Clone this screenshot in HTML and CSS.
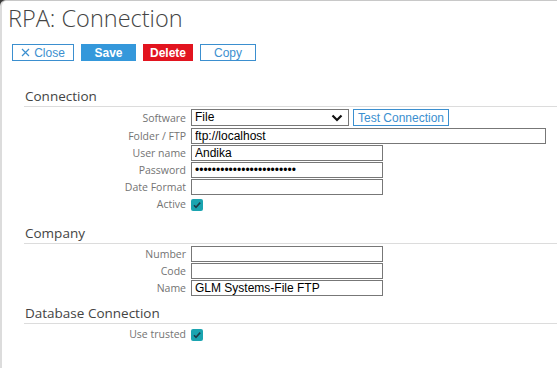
FILE: index.html
```
<!DOCTYPE html>
<html lang="en">
<head>
  <meta charset="UTF-8">
  <meta name="viewport" content="width=device-width, initial-scale=1.0">
  <title>RPA: Connection</title>
  <link rel="stylesheet" href="styles.css">
</head>
<body>

  <!-- editor panel -->
  <div class="panel">
    <h1>RPA: Connection</h1>

    <div class="toolbar">
      <button type="button" class="btn btn-outline btn-close">
        <svg width="9" height="9" viewBox="0 0 9 9"><path d="M1 1L8 8M8 1L1 8" stroke="#3b8fcf" stroke-width="1.2" fill="none"/></svg>
        Close
      </button>
      <button type="button" class="btn btn-save">Save</button>
      <button type="button" class="btn btn-delete">Delete</button>
      <button type="button" class="btn btn-outline btn-copy">Copy</button>
    </div>

    <!-- Connection -->
    <div class="section first">
      <h2>Connection</h2>
      <div class="row tall">
        <label>Software</label>
        <div class="field">
          <div class="select-box">
            <span class="select-value">File</span>
            <svg class="chevron" width="12" height="8" viewBox="0 0 12 8"><path d="M1.5 1.5L6 6L10.5 1.5" stroke="#111" stroke-width="2.2" fill="none"/></svg>
          </div>
          <button type="button" class="btn btn-outline btn-test">Test Connection</button>
        </div>
      </div>
      <div class="row">
        <label>Folder / FTP</label>
        <div class="field"><input type="text" class="input wide" value="ftp://localhost"></div>
      </div>
      <div class="row">
        <label>User name</label>
        <div class="field"><input type="text" class="input" value="Andika"></div>
      </div>
      <div class="row">
        <label>Password</label>
        <div class="field"><input type="password" class="input" value="abcdefghijklmnopqrstuvwx"></div>
      </div>
      <div class="row">
        <label>Date Format</label>
        <div class="field"><input type="text" class="input" value=""></div>
      </div>
      <div class="row">
        <label>Active</label>
        <div class="field">
          <span class="check"><svg width="12" height="12" viewBox="0 0 12 12"><path d="M3 6.2L5 8.3L9.2 3.6" stroke="#1f3b48" stroke-width="1.6" fill="none"/></svg></span>
        </div>
      </div>
    </div>

    <!-- Company -->
    <div class="section">
      <h2>Company</h2>
      <div class="row">
        <label>Number</label>
        <div class="field"><input type="text" class="input" value=""></div>
      </div>
      <div class="row">
        <label>Code</label>
        <div class="field"><input type="text" class="input" value=""></div>
      </div>
      <div class="row">
        <label>Name</label>
        <div class="field"><input type="text" class="input" value="GLM Systems-File FTP"></div>
      </div>
    </div>

    <!-- Database Connection -->
    <div class="section db">
      <h2>Database Connection</h2>
      <div class="row">
        <label>Use trusted</label>
        <div class="field">
          <span class="check"><svg width="12" height="12" viewBox="0 0 12 12"><path d="M3 6.2L5 8.3L9.2 3.6" stroke="#1f3b48" stroke-width="1.6" fill="none"/></svg></span>
        </div>
      </div>
    </div>
  </div>

</body>
</html>
```

FILE: styles.css
```
body {
  margin: 0;
  padding: 0;
  background-color: #3a3a3a;
  font-family: 'Open Sans', sans-serif;
  color: #444;
}

.panel {
  height: 367px;
  background-color: #fff;
  border-top: 1px solid #c8c8c8;
  border-left: 2px solid #dcdcdc;
  border-top-left-radius: 6px;
  overflow: hidden;
}

h1 {
  margin: 0;
  padding: 2px 0 0 6px;
  font-size: 23.5px;
  font-weight: 300;
  line-height: 31px;
  color: #444;
}

.toolbar {
  display: flex;
  gap: 7px;
  margin: 10px 0 0 10px;
}

.btn {
  font-family: 'Liberation Sans', Arial, sans-serif;
  font-size: 12px;
  height: 17px;
  padding: 0;
  border-radius: 0;
  cursor: pointer;
  display: flex;
  align-items: center;
  justify-content: center;
}

.btn-outline {
  background-color: #fff;
  border: 1px solid #3b8fcf;
  color: #3b8fcf;
}

.btn-close {
  width: 62px;
  gap: 4px;
}

.btn-copy {
  width: 56px;
}

.btn-save {
  width: 55px;
  background-color: #3498db;
  border: 1px solid #3498db;
  color: #fff;
  font-weight: bold;
}

.btn-delete {
  width: 50px;
  background-color: #e2141f;
  border: 1px solid #e2141f;
  color: #fff;
  font-weight: bold;
}

.section {
  margin: 11px 0 0 22px;
}

.section.first {
  margin-top: 25px;
}

.section.db {
  margin-top: 7px;
}

h2 {
  margin: 0 0 1px;
  padding: 0 0 0 1px;
  font-size: 13.5px;
  font-weight: 400;
  line-height: 20px;
  color: #444;
  border-bottom: 1px solid #dcdcdc;
}

.row {
  display: grid;
  grid-template-columns: 162px 1fr;
  column-gap: 5px;
  height: 17px;
  align-items: center;
}

.row.tall {
  height: 19px;
}

.row label {
  text-align: right;
  font-size: 10.5px;
  color: #737373;
  white-space: nowrap;
}

.field {
  display: flex;
  align-items: center;
  gap: 4px;
}

.input {
  box-sizing: border-box;
  width: 192px;
  height: 16px;
  padding: 0 3px;
  border: 1px solid #777;
  border-radius: 0;
  font-family: 'Liberation Sans', Arial, sans-serif;
  font-size: 12px;
  line-height: 14px;
  color: #000;
  outline: none;
}

.input.wide {
  width: 355px;
}

/* drop-down look-alike */
.select-box {
  box-sizing: border-box;
  width: 158px;
  height: 17px;
  padding: 0 5px 0 3px;
  border: 1px solid #777;
  background-color: #fff;
  display: flex;
  align-items: center;
  justify-content: space-between;
}

.select-value {
  font-family: 'Liberation Sans', Arial, sans-serif;
  font-size: 12px;
  line-height: 15px;
  color: #000;
}

.btn-test {
  width: 96px;
}

.check {
  display: inline-block;
  width: 12px;
  height: 12px;
  margin-top: 3px;
  border-radius: 2px;
  background-color: #1aa4b0;
}

.check svg {
  display: block;
}
```
